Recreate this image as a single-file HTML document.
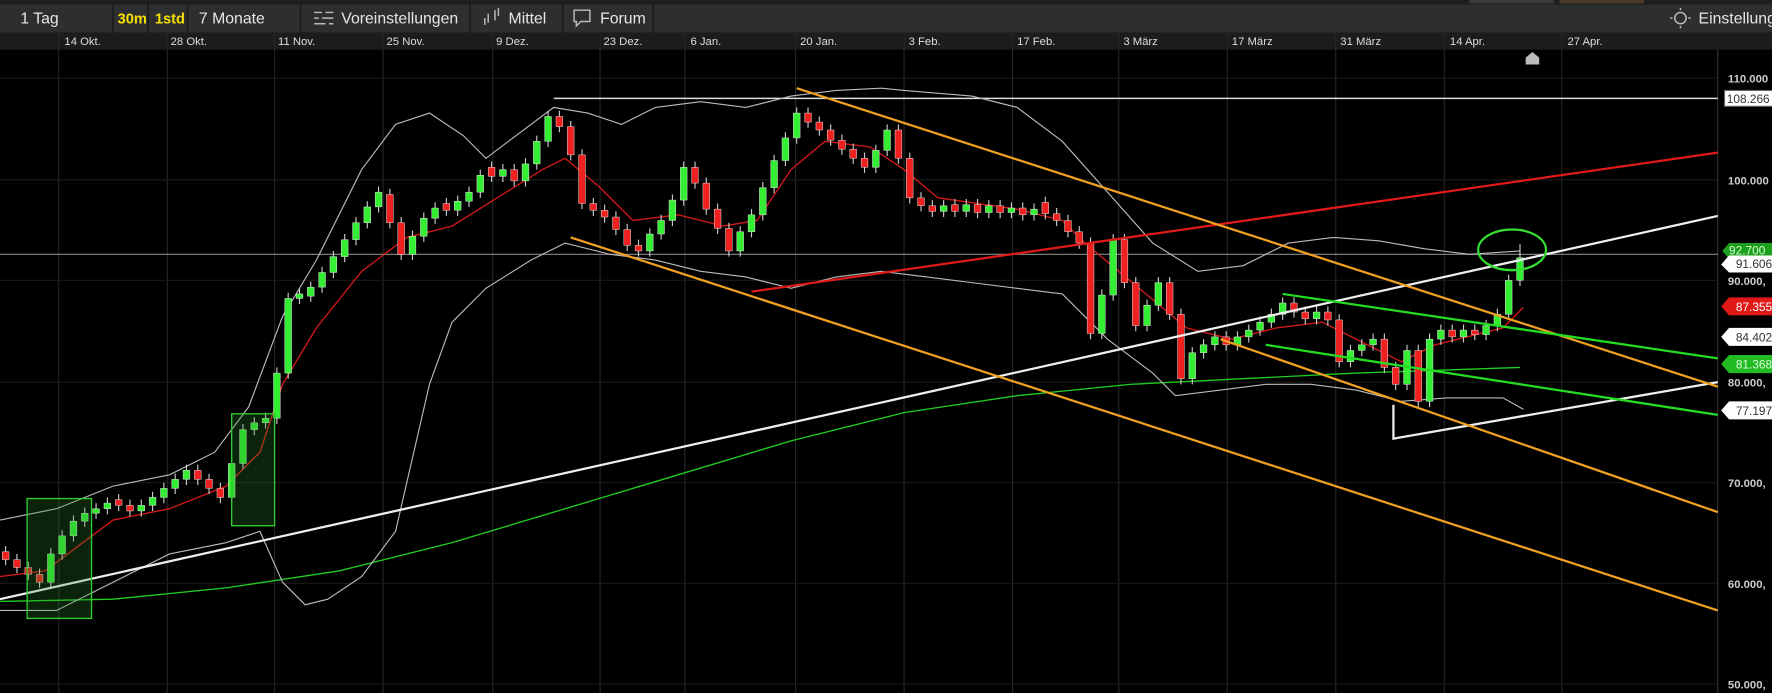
<!DOCTYPE html>
<html><head><meta charset="utf-8"><style>
html,body{margin:0;padding:0;background:#000;overflow:hidden}
svg{display:block}
text{font-family:"Liberation Sans",Arial,sans-serif}
</style></head><body>
<svg width="1772" height="693" viewBox="0 0 1568 613" preserveAspectRatio="none" xmlns="http://www.w3.org/2000/svg">
<rect width="1568" height="613" fill="#000"/>
<rect x="0" y="0" width="1568" height="4" fill="#1e1e1e"/>
<rect x="1300" y="0" width="75" height="3" fill="#3a3a3a"/>
<rect x="1380" y="0" width="75" height="3" fill="#4a3a2a"/>
<rect x="0" y="4" width="1568" height="25" fill="#2d2e30"/>
<g stroke="#1a1a1a" stroke-width="1.5">
<line x1="100" y1="4" x2="100" y2="29"/><line x1="131" y1="4" x2="131" y2="29"/><line x1="166" y1="4" x2="166" y2="29"/>
<line x1="266" y1="4" x2="266" y2="29"/><line x1="416" y1="4" x2="416" y2="29"/><line x1="498" y1="4" x2="498" y2="29"/><line x1="578" y1="4" x2="578" y2="29"/>
</g>
<g font-size="14" fill="#e6e6e6">
<text x="18" y="21">1 Tag</text>
<text x="104" y="21" fill="#f5e000" font-weight="bold" font-size="13">30m</text>
<text x="137" y="21" fill="#f5e000" font-weight="bold" font-size="13">1std</text>
<text x="176" y="21">7 Monate</text>
<text x="302" y="21">Voreinstellungen</text>
<text x="450" y="21">Mittel</text>
<text x="531" y="21">Forum</text>
<text x="1503" y="21">Einstellung</text>
</g>
<g stroke="#bbb" stroke-width="1.3" fill="none">
<path d="M278 11h7M288 11h7M278 16h4M285 16h10M278 21h10M291 21h4"/>
<path d="M429 22v-6M432 20v-8M438 18v-9M441 14v-7"/>
<path d="M508 9h14v10h-8l-4 4v-4h-2z"/>
<circle cx="1487" cy="16" r="5"/>
<path d="M1480 16h-2M1494 16h2M1487 9v-2M1487 23v2"/>
</g>
<rect x="0" y="29" width="1568" height="15" fill="#1c1c1c"/>
<g font-size="10" fill="#ddd">
<text x="57" y="40">14 Okt.</text><text x="151" y="40">28 Okt.</text><text x="246" y="40">11 Nov.</text><text x="342" y="40">25 Nov.</text>
<text x="439" y="40">9 Dez.</text><text x="534" y="40">23 Dez.</text><text x="611" y="40">6 Jan.</text><text x="708" y="40">20 Jan.</text>
<text x="804" y="40">3 Feb.</text><text x="900" y="40">17 Feb.</text><text x="994" y="40">3 März</text><text x="1090" y="40">17 März</text>
<text x="1186" y="40">31 März</text><text x="1283" y="40">14 Apr.</text><text x="1387" y="40">27 Apr.</text>
</g>
<g stroke="#262626" stroke-width="1">
<path d="M52 30V613M148 30V613M243 30V613M339 30V613M436 30V613M531 30V613M606 30V613M704 30V613M800 30V613M896 30V613M990 30V613M1086 30V613M1182 30V613M1278 30V613M1382 30V613"/>
<path d="M0 69H1520M0 159H1520M0 248H1520M0 338H1520M0 427H1520M0 516H1520M0 605H1520" stroke="#1a1a1a"/>
</g>
<line x1="1520" y1="44" x2="1520" y2="613" stroke="#333"/>
<path d="M1350 57v-6l6-5 6 5v6z" fill="#bbb"/>
<line x1="490" y1="87" x2="1520" y2="87" stroke="#ddd" stroke-width="1.3"/>
<line x1="0" y1="225" x2="1520" y2="225" stroke="#888" stroke-width="1"/>
<polyline fill="none" stroke="#22cc22" stroke-width="1.2" points="0,532 100,530 200,520 300,505 400,480 500,450 600,420 700,390 800,365 900,350 1000,340 1100,335 1200,330 1345,325"/>
<polyline fill="none" stroke="#bbb" stroke-width="1" points="0,460 50,450 100,430 150,420 190,400 220,360 250,280 280,230 320,150 350,110 380,100 410,120 430,140 470,110 490,95 520,100 550,110 580,95 620,90 660,95 700,85 740,80 780,78 800,80 860,85 900,95 940,125 980,170 1020,215 1060,240 1100,235 1140,215 1180,210 1220,213 1260,220 1300,225 1345,222"/>
<polyline fill="none" stroke="#bbb" stroke-width="1" points="0,540 50,540 100,515 150,490 200,480 230,470 250,515 270,535 290,530 320,510 350,470 380,340 400,285 430,255 470,230 500,215 540,225 580,230 620,240 660,245 700,255 740,245 780,240 820,245 860,250 900,255 940,260 980,300 1020,330 1040,350 1080,345 1120,340 1160,340 1200,345 1240,355 1280,352 1330,352 1348,362"/>
<polyline fill="none" stroke="#d01818" stroke-width="1.2" points="0,510 40,505 60,490 100,460 150,450 200,430 230,400 250,340 280,290 320,240 360,210 400,200 440,175 480,150 500,140 530,165 560,195 600,190 640,200 670,195 700,150 730,125 770,130 800,150 830,175 900,185 940,195 960,215 990,240 1020,265 1050,290 1090,300 1130,290 1170,285 1200,300 1240,320 1270,305 1310,295 1330,290 1348,272"/>
<!-- wicks -->
<path stroke="#ccc" stroke-width="1" fill="none" d="M5 483V500M15 490V507M25 497V513M35 503V520M45 485V520M55 469V495M65 456V479M75 449V466M85 445V459M95 440V455M105 437V452M115 442V457M125 442V457M135 435V452M145 427V445M155 419V437M165 411V429M175 411V429M185 419V437M195 427V445M205 405V445M215 375V415M225 369V385M235 365V379M245 325V375M255 259V335M265 255V269M275 249V267M285 236V259M295 222V246M305 207V232M315 192V217M325 178V202M335 165V188M345 167V202M355 192V230M365 204V230M375 188V214M385 179V198M395 175V191M405 173V191M415 165V183M425 150V175M435 143V161M445 145V161M455 145V165M465 140V165M475 120V150M485 98V130M495 98V117M505 107V142M515 132V185M525 175V191M535 181V197M545 187V208M555 198V222M565 212V227M575 202V227M585 190V212M595 172V200M605 143V182M615 143V167M625 157V190M635 180V207M645 197V227M655 200V227M665 185V210M675 161V195M685 137V171M695 117V147M705 95V127M715 95V113M725 103V120M735 110V129M745 119V137M755 127V145M765 135V153M775 128V153M785 110V138M795 110V145M805 135V180M815 170V187M825 177V192M835 177V192M845 176V192M855 176V192M865 176V193M875 177V193M885 177V193M895 179V193M905 179V195M915 180V195M925 174V194M935 184V200M945 190V210M955 200V220M965 210V300M975 256V300M985 207V266M995 207V255M1005 245V293M1015 265V293M1025 245V275M1035 245V283M1045 273V340M1055 307V340M1065 300V317M1075 293V310M1085 293V310M1095 293V310M1105 287V303M1115 280V297M1125 273V290M1135 263V283M1145 263V281M1155 271V287M1165 271V287M1175 271V288M1185 278V325M1195 305V325M1205 300V315M1215 295V310M1225 295V330M1235 320V345M1245 305V345M1255 305V360M1265 295V360M1275 287V305M1285 287V303M1295 287V303M1305 287V301M1315 283V301M1325 273V293M1335 243V283M1345 216V253"/>
<!-- green bodies -->
<path fill="#33ee33" stroke="#eee" stroke-width="0.4" d="M42 490h6v25h-6zM52 474h6v16h-6zM62 461h6v13h-6zM72 454h6v7h-6zM82 450h6v4h-6zM92 445h6v5h-6zM122 447h6v5h-6zM132 440h6v7h-6zM142 432h6v8h-6zM152 424h6v8h-6zM162 416h6v8h-6zM202 410h6v30h-6zM212 380h6v30h-6zM222 374h6v6h-6zM232 370h6v4h-6zM242 330h6v40h-6zM252 264h6v66h-6zM262 260h6v4h-6zM272 254h6v8h-6zM282 241h6v13h-6zM292 227h6v14h-6zM302 212h6v15h-6zM312 197h6v15h-6zM322 183h6v14h-6zM332 170h6v13h-6zM362 209h6v16h-6zM372 193h6v16h-6zM382 184h6v9h-6zM402 178h6v8h-6zM412 170h6v8h-6zM422 155h6v15h-6zM442 150h6v6h-6zM462 145h6v15h-6zM472 125h6v20h-6zM482 103h6v22h-6zM572 207h6v15h-6zM582 195h6v12h-6zM592 177h6v18h-6zM602 148h6v29h-6zM652 205h6v17h-6zM662 190h6v15h-6zM672 166h6v24h-6zM682 142h6v24h-6zM692 122h6v20h-6zM702 100h6v22h-6zM772 133h6v15h-6zM782 115h6v18h-6zM832 182h6v5h-6zM852 181h6v6h-6zM872 182h6v6h-6zM892 184h6v4h-6zM912 185h6v5h-6zM972 261h6v34h-6zM982 212h6v49h-6zM1012 270h6v18h-6zM1022 250h6v20h-6zM1052 312h6v23h-6zM1062 305h6v7h-6zM1072 298h6v7h-6zM1092 298h6v7h-6zM1102 292h6v6h-6zM1112 285h6v7h-6zM1122 278h6v7h-6zM1132 268h6v10h-6zM1162 276h6v6h-6zM1192 310h6v10h-6zM1202 305h6v5h-6zM1212 300h6v5h-6zM1242 310h6v30h-6zM1262 300h6v55h-6zM1272 292h6v8h-6zM1292 292h6v6h-6zM1312 288h6v8h-6zM1322 278h6v10h-6zM1332 248h6v30h-6zM1342 228h6v20h-6z"/>
<!-- red bodies -->
<path fill="#ee2020" stroke="#eee" stroke-width="0.4" d="M2 488h6v7h-6zM12 495h6v7h-6zM22 502h6v6h-6zM32 508h6v7h-6zM102 442h6v5h-6zM112 447h6v5h-6zM172 416h6v8h-6zM182 424h6v8h-6zM192 432h6v8h-6zM342 172h6v25h-6zM352 197h6v28h-6zM392 180h6v6h-6zM432 148h6v8h-6zM452 150h6v10h-6zM492 103h6v9h-6zM502 112h6v25h-6zM512 137h6v43h-6zM522 180h6v6h-6zM532 186h6v6h-6zM542 192h6v11h-6zM552 203h6v14h-6zM562 217h6v5h-6zM612 148h6v14h-6zM622 162h6v23h-6zM632 185h6v17h-6zM642 202h6v20h-6zM712 100h6v8h-6zM722 108h6v7h-6zM732 115h6v9h-6zM742 124h6v8h-6zM752 132h6v8h-6zM762 140h6v8h-6zM792 115h6v25h-6zM802 140h6v35h-6zM812 175h6v7h-6zM822 182h6v5h-6zM842 181h6v6h-6zM862 181h6v7h-6zM882 182h6v6h-6zM902 184h6v6h-6zM922 179h6v10h-6zM932 189h6v6h-6zM942 195h6v10h-6zM952 205h6v10h-6zM962 215h6v80h-6zM992 212h6v38h-6zM1002 250h6v38h-6zM1032 250h6v28h-6zM1042 278h6v57h-6zM1082 298h6v7h-6zM1142 268h6v8h-6zM1152 276h6v6h-6zM1172 276h6v7h-6zM1182 283h6v37h-6zM1222 300h6v25h-6zM1232 325h6v15h-6zM1252 310h6v45h-6zM1282 292h6v6h-6zM1302 292h6v4h-6z"/>
<g stroke-width="2" fill="none">
<line x1="665" y1="258" x2="1520" y2="135" stroke="#e01a1a"/>
<line x1="0" y1="530" x2="1520" y2="191" stroke="#eee"/>
<path d="M1233 358v30l287 -50" stroke="#eee"/>
<line x1="705" y1="78" x2="1520" y2="342" stroke="#f0a020"/>
<line x1="1080" y1="300" x2="1520" y2="453" stroke="#f0a020"/>
<line x1="505" y1="210" x2="1520" y2="540" stroke="#f0a020"/>
<line x1="1135" y1="260" x2="1520" y2="317" stroke="#22dd22"/>
<line x1="1120" y1="305" x2="1520" y2="367" stroke="#22dd22"/>
<ellipse cx="1338" cy="221" rx="30" ry="18" stroke="#33dd33"/>
</g>
<rect x="24" y="441" width="57" height="106" fill="rgba(40,140,40,0.25)" stroke="#2ecc2e" stroke-width="1.2"/>
<rect x="205" y="366" width="38" height="99" fill="rgba(40,140,40,0.25)" stroke="#2ecc2e" stroke-width="1.2"/>
<g font-size="10" font-weight="bold" fill="#ccc">
<text x="1529" y="73">110.000</text><text x="1529" y="163">100.000</text><text x="1529" y="252">90.000,</text>
<text x="1529" y="342">80.000,</text><text x="1529" y="431">70.000,</text><text x="1529" y="520">60.000,</text><text x="1529" y="609">50.000,</text>
</g>
<g font-size="10.5">
<path d="M1526 80h45v14h-45z" fill="#fff" stroke="#666"/><text x="1528" y="91" fill="#333">108.266</text>
<path d="M1530 215h42v14h-42l-6-7z" fill="#1e9e1e"/><text x="1530" y="225" fill="#cfc">92.700</text>
<path d="M1530 226h42v15h-42l-7-7z" fill="#fff"/><text x="1536" y="237" fill="#333">91.606</text>
<path d="M1530 263h42v16h-42l-7-8z" fill="#e01818"/><text x="1536" y="275" fill="#fff">87.355</text>
<path d="M1530 290h42v16h-42l-7-8z" fill="#fff"/><text x="1536" y="302" fill="#333">84.402</text>
<path d="M1530 314h42v16h-42l-7-8z" fill="#22bb22"/><text x="1536" y="326" fill="#dfd">81.368</text>
<path d="M1530 355h42v16h-42l-7-8z" fill="#fff"/><text x="1536" y="367" fill="#333">77.197</text>
</g>
</svg>
</body></html>
